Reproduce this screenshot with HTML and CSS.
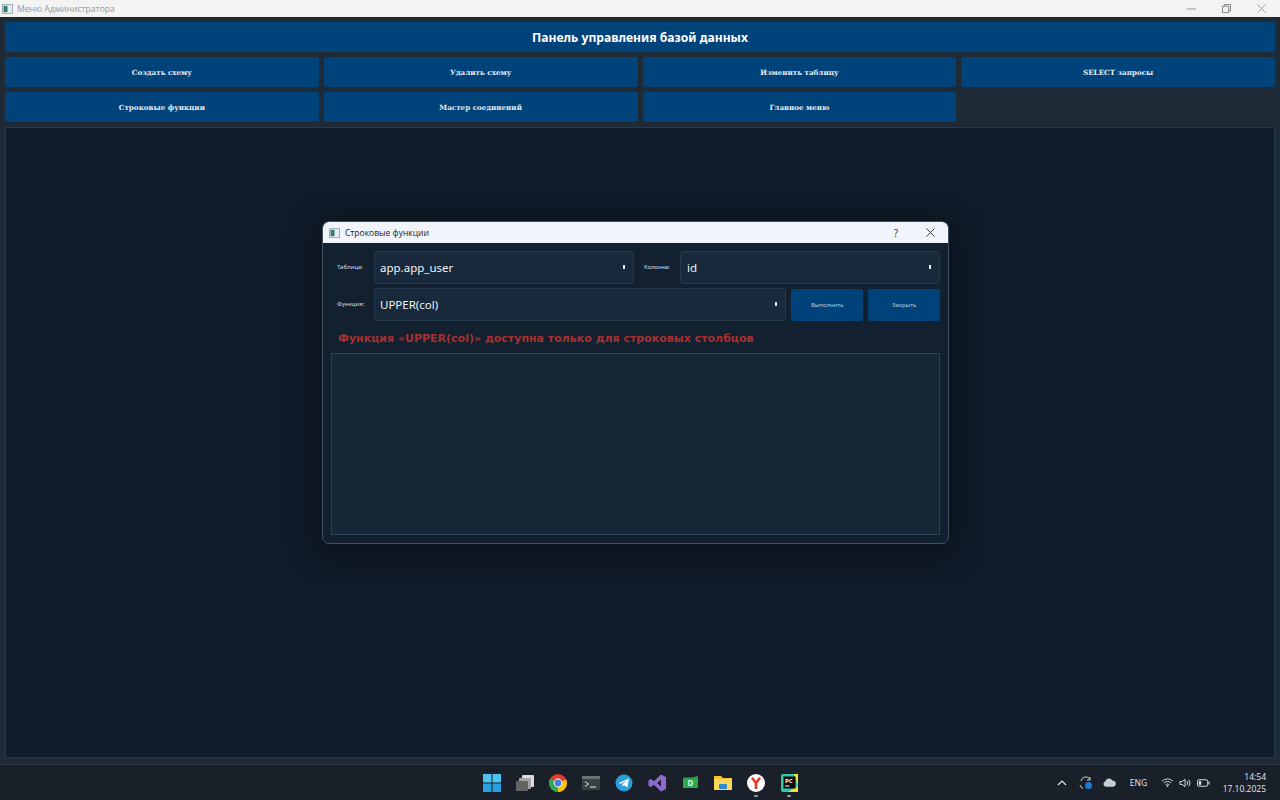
FILE: index.html
```html
<!DOCTYPE html>
<html lang="ru">
<head>
  <meta charset="UTF-8" />
  <title>Меню Администратора</title>
  <link rel="stylesheet" href="styles.css">
</head>
<body>
  <div class="titlebar">
    <svg class="app-icon" viewBox="0 0 14 12"><rect x="0.5" y="0.5" width="13" height="11" fill="#e8eef0" stroke="#8a9aa0"/><rect x="2" y="2" width="5" height="8" fill="#2f7d6a"/></svg>
    <span class="titlebar-text">Меню Администратора</span>
    <div class="win-controls">
      <svg viewBox="0 0 10 10"><path d="M0 5.5H10" stroke="#8b8b8b" fill="none"/></svg>
      <svg viewBox="0 0 10 10"><path d="M0.5 2.5H7.5V9.5H0.5ZM2.5 2.5V0.5H9.5V7.5H7.5" stroke="#777" fill="none"/></svg>
      <svg viewBox="0 0 10 10"><path d="M0.5 0.5L9.5 9.5M9.5 0.5L0.5 9.5" stroke="#999" fill="none"/></svg>
    </div>
  </div>

  <main class="app">
    <div class="app-header">Панель управления базой данных</div>
    <div class="nav-grid">
      <button class="nav-btn">Создать схему</button>
      <button class="nav-btn">Удалить схему</button>
      <button class="nav-btn">Изменить таблицу</button>
      <button class="nav-btn">SELECT запросы</button>
      <button class="nav-btn">Строковые функции</button>
      <button class="nav-btn">Мастер соединений</button>
      <button class="nav-btn">Главное меню</button>
    </div>
    <div class="workspace"></div>
  </main>

  <section class="dialog">
    <div class="dialog-title">
      <svg class="app-icon" viewBox="0 0 14 12"><rect x="0.5" y="0.5" width="13" height="11" fill="#e8eef0" stroke="#8a9aa0"/><rect x="2" y="2" width="5" height="8" fill="#2f7d6a"/></svg>
      <span class="dialog-name">Строковые функции</span>
      <span class="dialog-help">?</span>
      <svg class="dialog-close" viewBox="0 0 10 10"><path d="M0.5 0.5L9.5 9.5M9.5 0.5L0.5 9.5" stroke="#333" fill="none"/></svg>
    </div>
    <div class="dialog-body">
      <div class="form-row">
        <label class="field-label">Таблица:</label>
        <div class="combo combo-table">app.app_user<i class="combo-arrow"></i></div>
        <label class="field-label field-label-col">Колонка:</label>
        <div class="combo combo-col">id<i class="combo-arrow"></i></div>
      </div>
      <div class="form-row">
        <label class="field-label">Функция:</label>
        <div class="combo combo-func">UPPER(col)<i class="combo-arrow"></i></div>
        <button class="small-btn">Выполнить</button>
        <button class="small-btn">Закрыть</button>
      </div>
      <p class="error-text">Функция «UPPER(col)» доступна только для строковых столбцов</p>
      <div class="result-box"></div>
    </div>
  </section>

  <footer class="taskbar">
    <div class="task-icons">
      <!-- пуск -->
      <svg viewBox="0 0 18 18"><rect width="8.5" height="8.5" fill="#4cc2f1"/><rect x="9.5" width="8.5" height="8.5" fill="#4cc2f1"/><rect y="9.5" width="8.5" height="8.5" fill="#2a9fe0"/><rect x="9.5" y="9.5" width="8.5" height="8.5" fill="#2a9fe0"/></svg>
      <svg viewBox="0 0 18 18"><rect x="6" y="1" width="12" height="12" rx="1" fill="#dcdcdc"/><rect x="3" y="4" width="12" height="11" rx="1" fill="#a4a4a4"/><rect x="0" y="7" width="12" height="10" rx="1" fill="#646464"/></svg>
      <svg viewBox="0 0 18 18"><circle cx="9" cy="9" r="9" fill="#e33b2e"/><path d="M9 9L17.2 5.4A9 9 0 0 1 9 18Z" fill="#fbc116"/><path d="M9 9L9 18A9 9 0 0 1 1.2 4.5Z" fill="#2fa84f"/><circle cx="9" cy="9" r="4.4" fill="#fff"/><circle cx="9" cy="9" r="3.4" fill="#3c7fe6"/></svg>
      <svg viewBox="0 0 18 18"><rect y="2" width="18" height="14" rx="1" fill="#3a3f44"/><rect y="2" width="18" height="3" fill="#6c7074"/><path d="M3 7.5L6.5 10L3 12.5" stroke="#e8e8e8" fill="none"/><path d="M8 13H14" stroke="#e8e8e8"/></svg>
      <svg viewBox="0 0 18 18"><circle cx="9" cy="9" r="8.5" fill="#2a9ed8"/><path d="M3.5 9L14 4.6L12.4 13.6L9 11.2L7.6 12.6L7.3 10.2L12 6.2L6 9.8Z" fill="#fff"/></svg>
      <svg viewBox="0 0 18 18"><path d="M13 0.5L18 3V15L13 17.5L6 10.8L3 13L0.5 11.8V6.2L3 5L6 7.2ZM13 5.6L9 9L13 12.4Z" fill="#8f6bd0"/></svg>
      <svg viewBox="0 0 18 18"><path d="M2 4.5Q2 3.5 3 3.5H12L17 2V13Q17 14 16 14H3Q2 14 2 13Z" fill="#2ea84f"/><text x="9.5" y="12" class="tb-letter">D</text></svg>
      <svg viewBox="0 0 18 18"><path d="M0 2H7L9 4H18V16H0Z" fill="#f5c33b"/><rect y="5" width="18" height="11" fill="#fbd75b"/><rect x="5" y="10" width="8" height="5" rx="1" fill="#2a8ad4"/></svg>
      <svg viewBox="0 0 18 18"><circle cx="9" cy="9" r="9" fill="#fff"/><path d="M5 3.8L9 9L13 3.8M9 9V15" stroke="#e8352a" stroke-width="2.6" fill="none"/></svg>
      <svg viewBox="0 0 18 18"><rect x="1" y="0" width="17" height="18" rx="2" fill="#2fc9a8"/><path d="M14 0H18V18H8L18 12Z" fill="#f4e23c"/><rect x="3.5" y="2.5" width="12" height="12" fill="#0b0b0b"/><text x="5" y="8.5" class="tb-pc">PC</text><path d="M5 12H9.5" stroke="#fff"/></svg>
      <i class="run-dot run-dot-ya"></i>
      <i class="run-dot run-dot-pc"></i>
    </div>
    <div class="tray">
      <svg class="tray-chevron" viewBox="0 0 10 6"><path d="M1 5L5 1L9 5" stroke="#e6e6e6" stroke-width="1.2" fill="none"/></svg>
      <svg class="tray-sync" viewBox="0 0 14 14"><path d="M2 5A5 5 0 0 1 11 3M1 9A5 5 0 0 0 4 12.5" stroke="#cfd3d6" fill="none"/><path d="M11 1V4H8" stroke="#cfd3d6" fill="none"/><circle cx="9.5" cy="9.5" r="3.5" fill="#1a78d2"/></svg>
      <svg class="tray-cloud" viewBox="0 0 14 9"><path d="M3 9A3 3 0 0 1 2.6 3.2A4 4 0 0 1 10 2.4A3.2 3.2 0 0 1 11 9Z" fill="#c9cccf"/></svg>
      <span class="tray-lang">ENG</span>
      <svg class="tray-wifi" viewBox="0 0 14 10"><path d="M1 3.5A8.5 8.5 0 0 1 13 3.5M3 5.6A5.6 5.6 0 0 1 11 5.6M5 7.6A2.8 2.8 0 0 1 9 7.6" stroke="#e6e6e6" fill="none"/><circle cx="7" cy="9" r="1" fill="#e6e6e6"/></svg>
      <svg class="tray-sound" viewBox="0 0 14 10"><path d="M1 3.5H3.5L6.5 1V9L3.5 6.5H1Z" stroke="#e6e6e6" fill="none"/><path d="M8.5 3A3 3 0 0 1 8.5 7M10.5 1.5A5.5 5.5 0 0 1 10.5 8.5" stroke="#e6e6e6" fill="none"/></svg>
      <svg class="tray-battery" viewBox="0 0 14 8"><rect x="0.5" y="0.5" width="11" height="7" rx="1.5" stroke="#e6e6e6" fill="none"/><rect x="2" y="2" width="2.5" height="4" fill="#e6e6e6"/><rect x="12.3" y="2.5" width="1.2" height="3" fill="#e6e6e6"/></svg>
      <div class="tray-clock"><span>14:54</span><span>17.10.2025</span></div>
    </div>
  </footer>
</body>
</html>
```

FILE: styles.css
```css
* {
  box-sizing: border-box;
}

html, body {
  height: 100%;
}

body {
  margin: 0;
  height: 800px;
  display: flex;
  flex-direction: column;
  overflow: hidden;
  font-family: "Noto Sans", sans-serif;
  background: #1e2a35;
}

.titlebar {
  height: 17px;
  flex: none;
  display: flex;
  align-items: center;
  padding-left: 2px;
  background: #f3f3f3;
}

.app-icon {
  width: 11px;
  height: 10px;
  flex: none;
}

.titlebar-text {
  margin-left: 4px;
  font-size: 8.6px;
  color: #9a9a9a;
  font-family: "Open Sans", sans-serif;
}

.win-controls {
  margin-left: auto;
  display: flex;
  gap: 26px;
  padding-right: 14px;
}

.win-controls svg {
  width: 9px;
  height: 9px;
}

.app {
  flex: 1;
  display: flex;
  flex-direction: column;
  gap: 5px;
  padding: 5px 5px 6px;
  min-height: 0;
}

.app-header {
  height: 30px;
  flex: none;
  display: flex;
  align-items: center;
  justify-content: center;
  background: #00427a;
  border-radius: 2px;
  color: #fff;
  font-size: 12.15px;
  font-weight: 700;
}

.nav-grid {
  display: grid;
  grid-template-columns: repeat(4, 1fr);
  grid-auto-rows: 30px;
  gap: 5px;
  flex: none;
}

.nav-btn {
  border: none;
  border-radius: 2px;
  background: #00427a;
  color: #e3edf5;
  font-family: "DejaVu Serif", serif;
  font-size: 7.15px;
  font-weight: 700;
  padding: 1px 0 0;
}

.workspace {
  flex: 1;
  background: #0f1b28;
  border: 1px solid #253a4c;
}

.dialog {
  position: absolute;
  left: 322px;
  top: 221px;
  width: 627px;
  height: 323px;
  background: #122030;
  border: 1px solid #44525e;
  border-radius: 7px;
  box-shadow: 0 6px 30px rgba(0, 0, 0, 0.5);
  overflow: hidden;
}

.dialog-title {
  height: 21px;
  display: flex;
  align-items: center;
  padding-left: 6px;
  background: #f1f4fb;
}

.dialog-name {
  margin-left: 5px;
  padding-bottom: 1px;
  font-size: 8.5px;
  color: #222;
  font-family: "Open Sans", sans-serif;
}

.dialog-help {
  margin-left: auto;
  font-size: 10px;
  color: #444;
}

.dialog-close {
  width: 9px;
  height: 9px;
  margin: 0 13px 0 28px;
}

.dialog-body {
  padding: 7px 8px 8px;
  display: flex;
  flex-direction: column;
}

.form-row {
  display: flex;
  align-items: center;
  height: 34px;
  margin-bottom: 3px;
}

.field-label {
  width: 43px;
  flex: none;
  font-size: 6px;
  color: #d5dee6;
  padding-left: 6px;
}

.field-label-col {
  width: 46px;
  padding-left: 10px;
}

.combo {
  position: relative;
  height: 33px;
  display: flex;
  align-items: center;
  padding-left: 5px;
  background: #17293a;
  border: 1px solid #23384a;
  border-radius: 3px;
  color: #f0f4f7;
  font-size: 11.5px;
}

.combo-table {
  width: 260px;
}

.combo-col {
  width: 260px;
  padding-left: 6px;
}

.combo-func {
  width: 413px;
}

.combo-arrow {
  position: absolute;
  right: 8px;
  top: 13px;
  width: 2px;
  height: 4px;
  background: #e8eef3;
}

.small-btn {
  width: 72px;
  height: 32px;
  margin-left: 5px;
  align-self: flex-end;
  border: none;
  border-radius: 2px;
  background: #00427a;
  color: #b9cbdb;
  font-family: "Noto Sans", sans-serif;
  font-size: 6px;
  padding: 0;
}

.error-text {
  margin: 3px 0 2px;
  padding-left: 7px;
  height: 24px;
  line-height: 24px;
  color: #a8302f;
  font-family: "DejaVu Sans", sans-serif;
  font-size: 11px;
  font-weight: 700;
}

.result-box {
  height: 182px;
  background: #162636;
  border: 1px solid #2a4256;
}

.taskbar {
  position: relative;
  height: 36px;
  flex: none;
  display: grid;
  grid-template-columns: 1fr auto 1fr;
  align-items: center;
  background: #1a2029;
  border-top: 1px solid #2d3a46;
}

.task-icons {
  grid-column: 2;
  position: relative;
  display: flex;
  gap: 15px;
}

.task-icons svg {
  width: 18px;
  height: 18px;
  display: block;
}

.tb-letter {
  font-size: 8px;
  font-weight: 700;
  fill: #d9f5e0;
  text-anchor: middle;
}

.tb-pc {
  font-size: 6px;
  font-weight: 700;
  fill: #fff;
}

.run-dot {
  position: absolute;
  bottom: -5px;
  width: 4px;
  height: 2px;
  background: #9aa0a6;
  border-radius: 1px;
}

.run-dot-ya {
  left: 271px;
}

.run-dot-pc {
  left: 304px;
}

.tray {
  grid-column: 3;
  display: flex;
  align-items: center;
  justify-self: end;
  padding-right: 14px;
  color: #e4e6e8;
}

.tray svg {
  flex: none;
}

.tray-chevron {
  width: 10px;
  height: 6px;
}

.tray-sync {
  width: 14px;
  height: 14px;
  margin-left: 12px;
}

.tray-cloud {
  width: 13px;
  height: 9px;
  margin-left: 10.5px;
}

.tray-lang {
  margin-left: 13.5px;
  font-size: 8.5px;
  font-family: "Open Sans", sans-serif;
}

.tray-wifi {
  width: 13px;
  height: 9px;
  margin-left: 14px;
}

.tray-sound {
  width: 13px;
  height: 10px;
  margin-left: 5px;
}

.tray-battery {
  width: 13px;
  height: 8px;
  margin-left: 5px;
}

.tray-clock {
  display: flex;
  flex-direction: column;
  align-items: flex-end;
  margin-left: 12.5px;
  font-size: 8.5px;
  line-height: 11.5px;
  font-family: "Open Sans", sans-serif;
}
```
